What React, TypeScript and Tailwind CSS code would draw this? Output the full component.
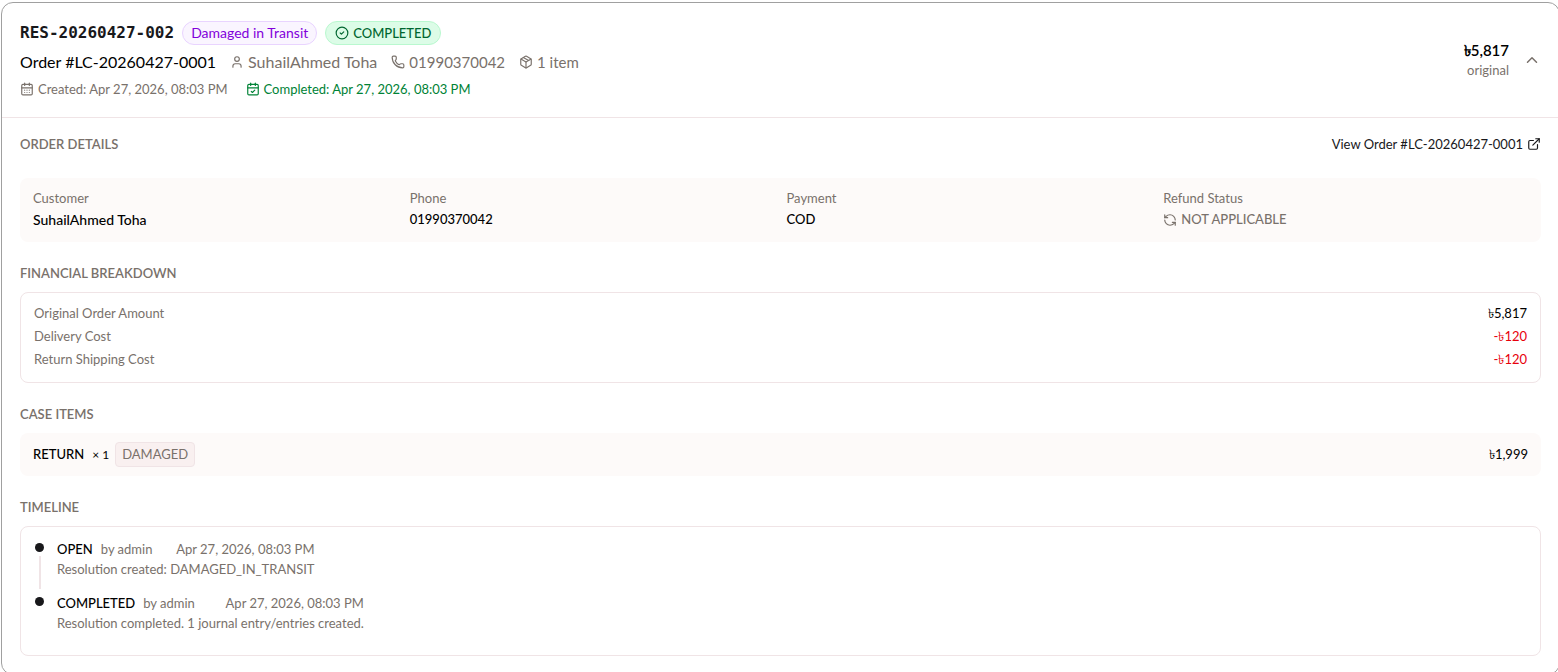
import React, { useState } from 'react';
import {
  CalendarCheck,
  CalendarDays,
  ChevronUp,
  CircleCheck,
  ExternalLink,
  Package,
  Phone,
  RefreshCcw,
  User,
} from 'lucide-react';

const order = 'LC-20260427-0001';

const costs = [
  { label: 'Original Order Amount', value: '৳5,817', negative: false },
  { label: 'Delivery Cost', value: '-৳120', negative: true },
  { label: 'Return Shipping Cost', value: '-৳120', negative: true },
];

const events = [
  {
    status: 'OPEN',
    by: 'admin',
    date: 'Apr 27, 2026, 08:03 PM',
    note: 'Resolution created: DAMAGED_IN_TRANSIT',
  },
  {
    status: 'COMPLETED',
    by: 'admin',
    date: 'Apr 27, 2026, 08:03 PM',
    note: 'Resolution completed. 1 journal entry/entries created.',
  },
];

const SectionTitle = ({ children }: { children: React.ReactNode }) => (
  <h3 className="text-[13px] leading-[22px] font-semibold uppercase text-[#79716b]">{children}</h3>
);

const Field = ({ label, children }: { label: string; children: React.ReactNode }) => (
  <div className="text-[13px] leading-[21px]">
    <dt className="text-[#79716b]">{label}</dt>
    <dd className="font-medium text-black">{children}</dd>
  </div>
);

const App = () => {
  const [open, setOpen] = useState(true);

  return (
    <main className="overflow-hidden bg-white pl-px pt-0.5 font-['Lato','Noto_Sans',sans-serif] text-black">
      <article className="-mr-0.5 -mb-px rounded-xl border border-[#a0a0a0]">
        <header className="flex items-center justify-between px-4.5 pt-4.5 pb-4.5">
          <div>
            <div className="flex items-center gap-2">
              <h2 className="font-['DejaVu_Sans_Mono',monospace] text-base leading-6 font-bold text-[#18181b]">
                RES-20260427-002
              </h2>
              <span className="rounded-full border border-[#e9d4ff] bg-[#faf5ff] px-2 text-[14px] leading-[22px] text-[#8200db]">
                Damaged in Transit
              </span>
              <span className="flex items-center gap-1 rounded-full border border-[#b9f8cf] bg-[#dcfce7] px-[9px] text-[13px] leading-[22px] font-medium text-[#016630]">
                <CircleCheck className="size-3.5" />
                COMPLETED
              </span>
            </div>
            <div className="mt-1 flex items-center gap-3.5 text-base leading-[26px] text-[#79716b]">
              <span className="text-black">Order #{order}</span>
              <span className="flex items-center gap-1">
                <User className="size-3.5" />
                SuhailAhmed Toha
              </span>
              <span className="flex items-center gap-1 text-[15px]">
                <Phone className="size-3.5" />
                01990370042
              </span>
              <span className="flex items-center gap-1 text-[15px]">
                <Package className="size-3.5" />1 item
              </span>
            </div>
            <div className="mt-1 flex items-center gap-4.5 text-[13px] leading-5 text-[#79716b]">
              <span className="flex items-center gap-1">
                <CalendarDays className="size-3.5" />
                Created: Apr 27, 2026, 08:03 PM
              </span>
              <span className="flex items-center gap-1 text-[#008236]">
                <CalendarCheck className="size-3.5" />
                Completed: Apr 27, 2026, 08:03 PM
              </span>
            </div>
          </div>
          <div className="flex items-center gap-3.5">
            <div className="text-right">
              <p className="text-[15px] leading-5 font-semibold">৳5,817</p>
              <p className="text-[13px] leading-5 text-[#79716b]">original</p>
            </div>
            <button type="button" aria-label="Toggle details" onClick={() => setOpen(!open)} className="text-[#79716b]">
              <ChevronUp className="size-4.5" />
            </button>
          </div>
        </header>

        {open && (
          <div className="space-y-5 border-t border-[#f0e4e6] px-4.5 pt-[15px] pb-4.5">
            <section>
              <div className="flex items-center justify-between">
                <SectionTitle>Order Details</SectionTitle>
                <a href="#order" className="flex items-center gap-1 text-[13px] leading-5 text-[#18181b]">
                  View Order #{order}
                  <ExternalLink className="size-3.5" />
                </a>
              </div>
              <dl className="mt-[23px] grid grid-cols-4 gap-3 rounded-lg bg-[#fdfaf9] px-[13px] pt-2.5 pb-[11px]">
                <Field label="Customer">
                  <span className="text-[14px]">SuhailAhmed Toha</span>
                </Field>
                <Field label="Phone">01990370042</Field>
                <Field label="Payment">COD</Field>
                <Field label="Refund Status">
                  <span className="flex items-center gap-1 text-[#79716b]">
                    <RefreshCcw className="size-3.5" />
                    NOT APPLICABLE
                  </span>
                </Field>
              </dl>
            </section>

            <section>
              <SectionTitle>Financial Breakdown</SectionTitle>
              <dl className="mt-2 rounded-lg border border-[#f0e4e6] px-[13px] pt-[9px] pb-[11px]">
                {costs.map((cost) => (
                  <div key={cost.label} className="flex justify-between text-[13px] leading-[23px]">
                    <dt className="text-[#79716b]">{cost.label}</dt>
                    <dd className={cost.negative ? 'text-[#e7000b]' : 'text-black'}>{cost.value}</dd>
                  </div>
                ))}
              </dl>
            </section>

            <section>
              <SectionTitle>Case Items</SectionTitle>
              <div className="mt-2 flex items-center rounded-lg bg-[#fdfaf9] px-[13px] py-[9px] text-[13px]">
                <span className="font-medium">RETURN</span>
                <span className="ml-2 text-xs">× 1</span>
                <span className="ml-1.5 rounded border border-[#f0e4e6] bg-[#f9f0f0] px-1.5 leading-[23px] text-[#79716b]">
                  DAMAGED
                </span>
                <span className="ml-auto">৳1,999</span>
              </div>
            </section>

            <section>
              <SectionTitle>Timeline</SectionTitle>
              <ol className="mt-2 rounded-lg border border-[#f0e4e6] px-3.5 pt-3 pb-2">
                {events.map((event, i) => (
                  <li key={event.status} className="flex gap-[13px]">
                    <div className="flex flex-col items-center pt-1">
                      <span className="size-[9px] rounded-full bg-[#18181b]" />
                      {i < events.length - 1 && <span className="my-1 w-0.5 grow bg-[#f0e4e6]" />}
                    </div>
                    <div className="pb-3.5 text-[13px] leading-5 text-[#79716b]">
                      <p className="flex">
                        <span className="font-medium text-black">{event.status}</span>
                        <span className="ml-2">by {event.by}</span>
                        <time className="ml-auto">{event.date}</time>
                      </p>
                      <p>{event.note}</p>
                    </div>
                  </li>
                ))}
              </ol>
            </section>
          </div>
        )}
      </article>
    </main>
  );
};

export default App;
